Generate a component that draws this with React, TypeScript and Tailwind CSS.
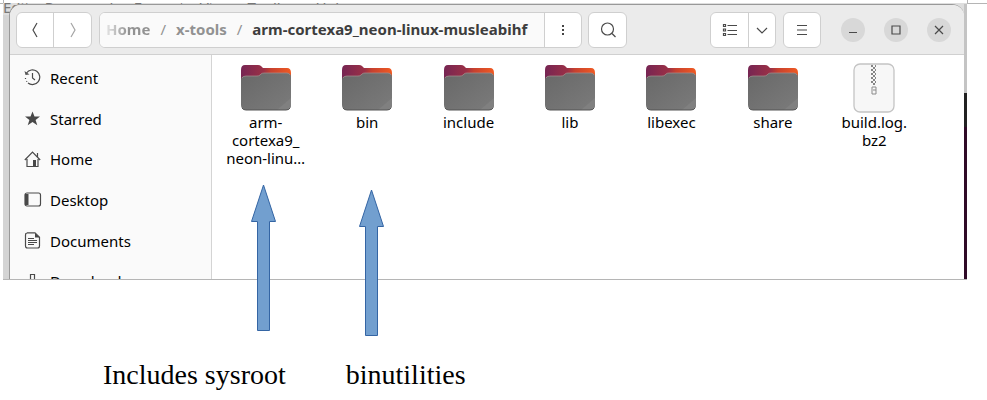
import React from "react";
import type { ReactNode } from "react";

const menus = ["Edit", "Paragraph", "Format", "View", "Toolbar", "Help"];

function Folder() {
  return (
    <svg width="50" height="46" viewBox="0 0 50 46" aria-hidden="true">
      <defs>
        <linearGradient id="back" x1="0" y1="0" x2="1" y2="0">
          <stop offset="0" stopColor="#762553" />
          <stop offset="0.45" stopColor="#9b3046" />
          <stop offset="0.6" stopColor="#c7412f" />
          <stop offset="1" stopColor="#f05a22" />
        </linearGradient>
        <linearGradient id="front" x1="0" y1="0" x2="1" y2="1">
          <stop offset="0" stopColor="#686868" />
          <stop offset="1" stopColor="#7b7b7b" />
        </linearGradient>
      </defs>
      <path d="M4 0H17Q19 0 20 1L22 3H46Q50 3 50 8V30H0V5Q0 0 4 0Z" fill="url(#back)" />
      <path d="M4 11H16Q18 11 19 10L20 9Q21 8 23 8H46Q50 8 50 12V40Q50 45 45 45H5Q0 45 0 40V15Q0 11 4 11Z" fill="url(#front)" />
      <path d="M1 13Q2 11 5 11H16Q18 11 19 10L20 9Q21 8 23 8H46Q48 8 49 10" fill="none" stroke="#a7918f" strokeWidth="0.7" />
      <path d="M36 45L50 33V40Q50 45 45 45Z" fill="#808080" />
      <path d="M1 43Q2 45 5 45H45Q48 45 49 43" fill="none" stroke="#555" strokeWidth="1" />
    </svg>
  );
}

function Archive() {
  return (
    <svg width="42" height="50" viewBox="0 0 42 50" aria-hidden="true">
      <rect x="1" y="1" width="40" height="48" rx="6" fill="#f7f7f7" stroke="#c4c4c4" strokeWidth="1.3" />
      <path d="M18 2h2v2h-2zM20 4h2v2h-2zM18 6h2v2h-2zM20 8h2v2h-2zM18 10h2v2h-2zM20 12h2v2h-2zM18 14h2v2h-2zM20 16h2v2h-2zM18 18h2v2h-2zM20 20h2v2h-2zM22 2h1v2h-1zM22 6h1v2h-1zM22 10h1v2h-1zM22 14h1v2h-1zM22 18h1v2h-1z" fill="#858585" />
      <path d="M19 24h4v7h-4zM20 27h3" fill="none" stroke="#8b8b8b" />
    </svg>
  );
}

const files = [
  { name: ["arm-", "cortexa9_", "neon-linu…"], archive: false },
  { name: ["bin"], archive: false },
  { name: ["include"], archive: false },
  { name: ["lib"], archive: false },
  { name: ["libexec"], archive: false },
  { name: ["share"], archive: false },
  { name: ["build.log.", "bz2"], archive: true },
];

const places: { name: string; icon: ReactNode }[] = [
  {
    name: "Recent",
    icon: (
      <>
        <path d="M2.500 4A7.300 7.300 0 1 1 4 14M8.500 4v5l2.500 2" />
        <path d="M0.500 2l1 4 4-.5z" fill="#555" stroke="none" />
        <path d="M1.500 9v1M2.500 12l.5.8" />
      </>
    ),
  },
  { name: "Starred", icon: <path d="M8.500 1.500l2 5h5.500l-4.400 3.400 1.700 5.300-4.800-3.200-4.800 3.200 1.700-5.300L1 6.500h5.500z" fill="#484848" stroke="none" /> },
  {
    name: "Home",
    icon: (
      <>
        <path d="M.8 9L8.500 1.200 16.200 9M3 8v7.500h11V8M13.500 2v4" />
        <path d="M9 9h3v6.500H9z" fill="#484848" stroke="none" />
      </>
    ),
  },
  {
    name: "Desktop",
    icon: (
      <>
        <rect x="1" y="2" width="15.500" height="13" rx="2" />
        <path d="M1 3h3.500v11H1z" fill="#484848" stroke="none" />
      </>
    ),
  },
  {
    name: "Documents",
    icon: (
      <>
        <path d="M3 .8h8l4.500 4.500V14q0 2-2 2h-10q-2 0-2-2V3q0-2 2-2zM4 6.500h6M4 8.500h9M4 10.500h9M4 12.500h6" />
        <path d="M11 1v4.500h4.500z" fill="#484848" stroke="none" />
      </>
    ),
  },
  { name: "Downloads", icon: <path d="M6.500 8V1.500h4V8h3.500l-5.500 6L3 8z" /> },
];

function Arrow({ className }: { className: string }) {
  return (
    <svg className={className} width="26" height="148" viewBox="0 0 26 148" aria-hidden="true">
      <path d="M12.500 1L24.500 37.500H18.500V146.500H6.500V37.500H0.500Z" fill="#729fcf" stroke="#3465a4" />
    </svg>
  );
}

function Glyph({ children }: { children: ReactNode }) {
  return (
    <svg width="18" height="18" viewBox="0 0 18 18" fill="none" stroke="#4a4a4a" strokeWidth="1.2" aria-hidden="true">
      {children}
    </svg>
  );
}

const box = "flex h-9 shrink-0 overflow-hidden rounded-md border border-[#cfcfcf] bg-white";
const cell = "flex items-center justify-center";
const round = "flex size-6 items-center justify-center rounded-full bg-[#d8d8d8]";

export default function App() {
  return (
    <main className="relative bg-white text-black">
      <div className="flex h-1">
        <div className="w-1 border-r border-b border-[#b5b5b5]" />
        <div className="grow" />
        <div className="w-5 border-b border-l border-[#b5b5b5]" />
      </div>
      <section className="relative mr-5 ml-[3px] flex h-[276px] border-b border-[#b5b5b5] bg-[#d4d4d4]">
        <div className="absolute inset-x-0 -top-px flex h-3 items-end gap-[15px] overflow-hidden bg-[#dedede] pb-0.5 font-['Noto_Sans',sans-serif] text-[15px] leading-3 text-[#777]">
          {menus.map((m) => <span key={m}>{m}</span>)}
        </div>
        <div className="relative ml-1.5 flex min-w-0 grow flex-col overflow-hidden rounded-t-xl border-t border-l border-[#999] bg-white font-['Noto_Sans',sans-serif]">
          <header className="flex h-[50px] shrink-0 items-center border-b border-[#d0d0d0] bg-[#ebebeb] pr-[13px] pl-1.5">
            <div className={box}>
              <button aria-label="Back" className={`${cell} w-[37px] border-r border-[#cfcfcf]`}><Glyph><path d="M11 2L7 9l4 7" /></Glyph></button>
              <button aria-label="Forward" className={`${cell} w-[37px] opacity-50`}><Glyph><path d="M7 2l4 7-4 7" /></Glyph></button>
            </div>
            <nav aria-label="Path" className={`${box} ml-[7px]`}>
              <div className="flex w-[444px] items-center gap-2.5 bg-[#fafafa] pl-1.5 text-[15px] font-bold whitespace-nowrap text-[#929292]">
                <a href="#home" className="bg-linear-to-r from-[#e5e5e5] to-[#929292] to-50% bg-clip-text text-transparent">Home</a>
                <span className="font-normal">/</span>
                <a href="#x-tools">x-tools</a>
                <span className="font-normal">/</span>
                <a href="#current" className="text-[#3d3d3d]">arm-cortexa9_neon-linux-musleabihf</a>
              </div>
              <button aria-label="Path menu" className={`${cell} w-[37px] border-l border-[#cfcfcf]`}><Glyph><path d="M8 4h2v2H8zM8 8h2v2H8zM8 12h2v2H8z" fill="#444" stroke="none" /></Glyph></button>
            </nav>
            <button aria-label="Search" className={`${box} ${cell} ml-1.5 w-[39px]`}><Glyph><circle cx="8.500" cy="8" r="6" /><path d="M13 12.500l3.500 3.500" /></Glyph></button>
            <div className="grow" />
            <div className={box}>
              <button aria-label="List view" className={`${cell} w-[38px] border-r border-[#cfcfcf]`}><Glyph><path d="M6.500 4.500H16M6.500 9.500H16M6.500 13.500H16" /><path d="M2.500 3.500h2v2h-2zM2.500 8h2v2h-2zM2.500 12.500h2v2h-2z" /></Glyph></button>
              <button aria-label="View options" className={`${cell} w-[26px]`}><Glyph><path d="M4 7l5 5 5-5" /></Glyph></button>
            </div>
            <button aria-label="Main menu" className={`${box} ${cell} mr-5 ml-[7px] w-[38px]`}><Glyph><path d="M4 4.500h10M4 9h10M4 13.500h10" /></Glyph></button>
            <div className="flex gap-[19px]">
              <button aria-label="Minimize" className={round}><Glyph><path d="M5 11.500h8" /></Glyph></button>
              <button aria-label="Maximize" className={round}><Glyph><path d="M5 5h8v8H5z" /></Glyph></button>
              <button aria-label="Close" className={round}><Glyph><path d="M5 5l8 8M13 5l-8 8" /></Glyph></button>
            </div>
          </header>
          <div className="flex min-h-0 grow text-[15px]">
            <aside className="w-[202px] shrink-0 overflow-hidden border-r border-[#d4d4d4] bg-[#fafafa] pt-[3px]">
              <nav aria-label="Places" className="grid h-[244px] grid-rows-6">
                {places.map((p) => (
                  <a key={p.name} href={`#${p.name}`} className="flex items-center gap-2 pl-3.5"><Glyph>{p.icon}</Glyph>{p.name}</a>
                ))}
              </nav>
            </aside>
            <div className="min-w-0 grow pt-2 pl-[3px]">
              <div className="grid max-w-[710px] grid-cols-7">
                {files.map((f) => (
                  <div key={f.name[0]} className="flex flex-col items-center">
                    <div className="flex h-[50px] items-center">{f.archive ? <Archive /> : <Folder />}</div>
                    <div className="text-center leading-[18px]">{f.name.map((n) => <div key={n}>{n}</div>)}</div>
                  </div>
                ))}
              </div>
            </div>
          </div>
        </div>
        <div className="relative flex w-[3px] flex-col"><div className="h-[89px] bg-[#c4c4c4]" /><div className="h-[34px] bg-[#222]" /><div className="grow bg-[#300a28]" /></div>
      </section>
      <Arrow className="absolute top-[184px] left-[251px]" />
      <Arrow className="absolute top-[189px] left-[359px]" />
      <div className="flex gap-[60px] pt-[79px] pl-[103px] font-['Liberation_Serif',serif] text-[28px] leading-8"><p>Includes sysroot</p><p>binutilities</p></div>
    </main>
  );
}
